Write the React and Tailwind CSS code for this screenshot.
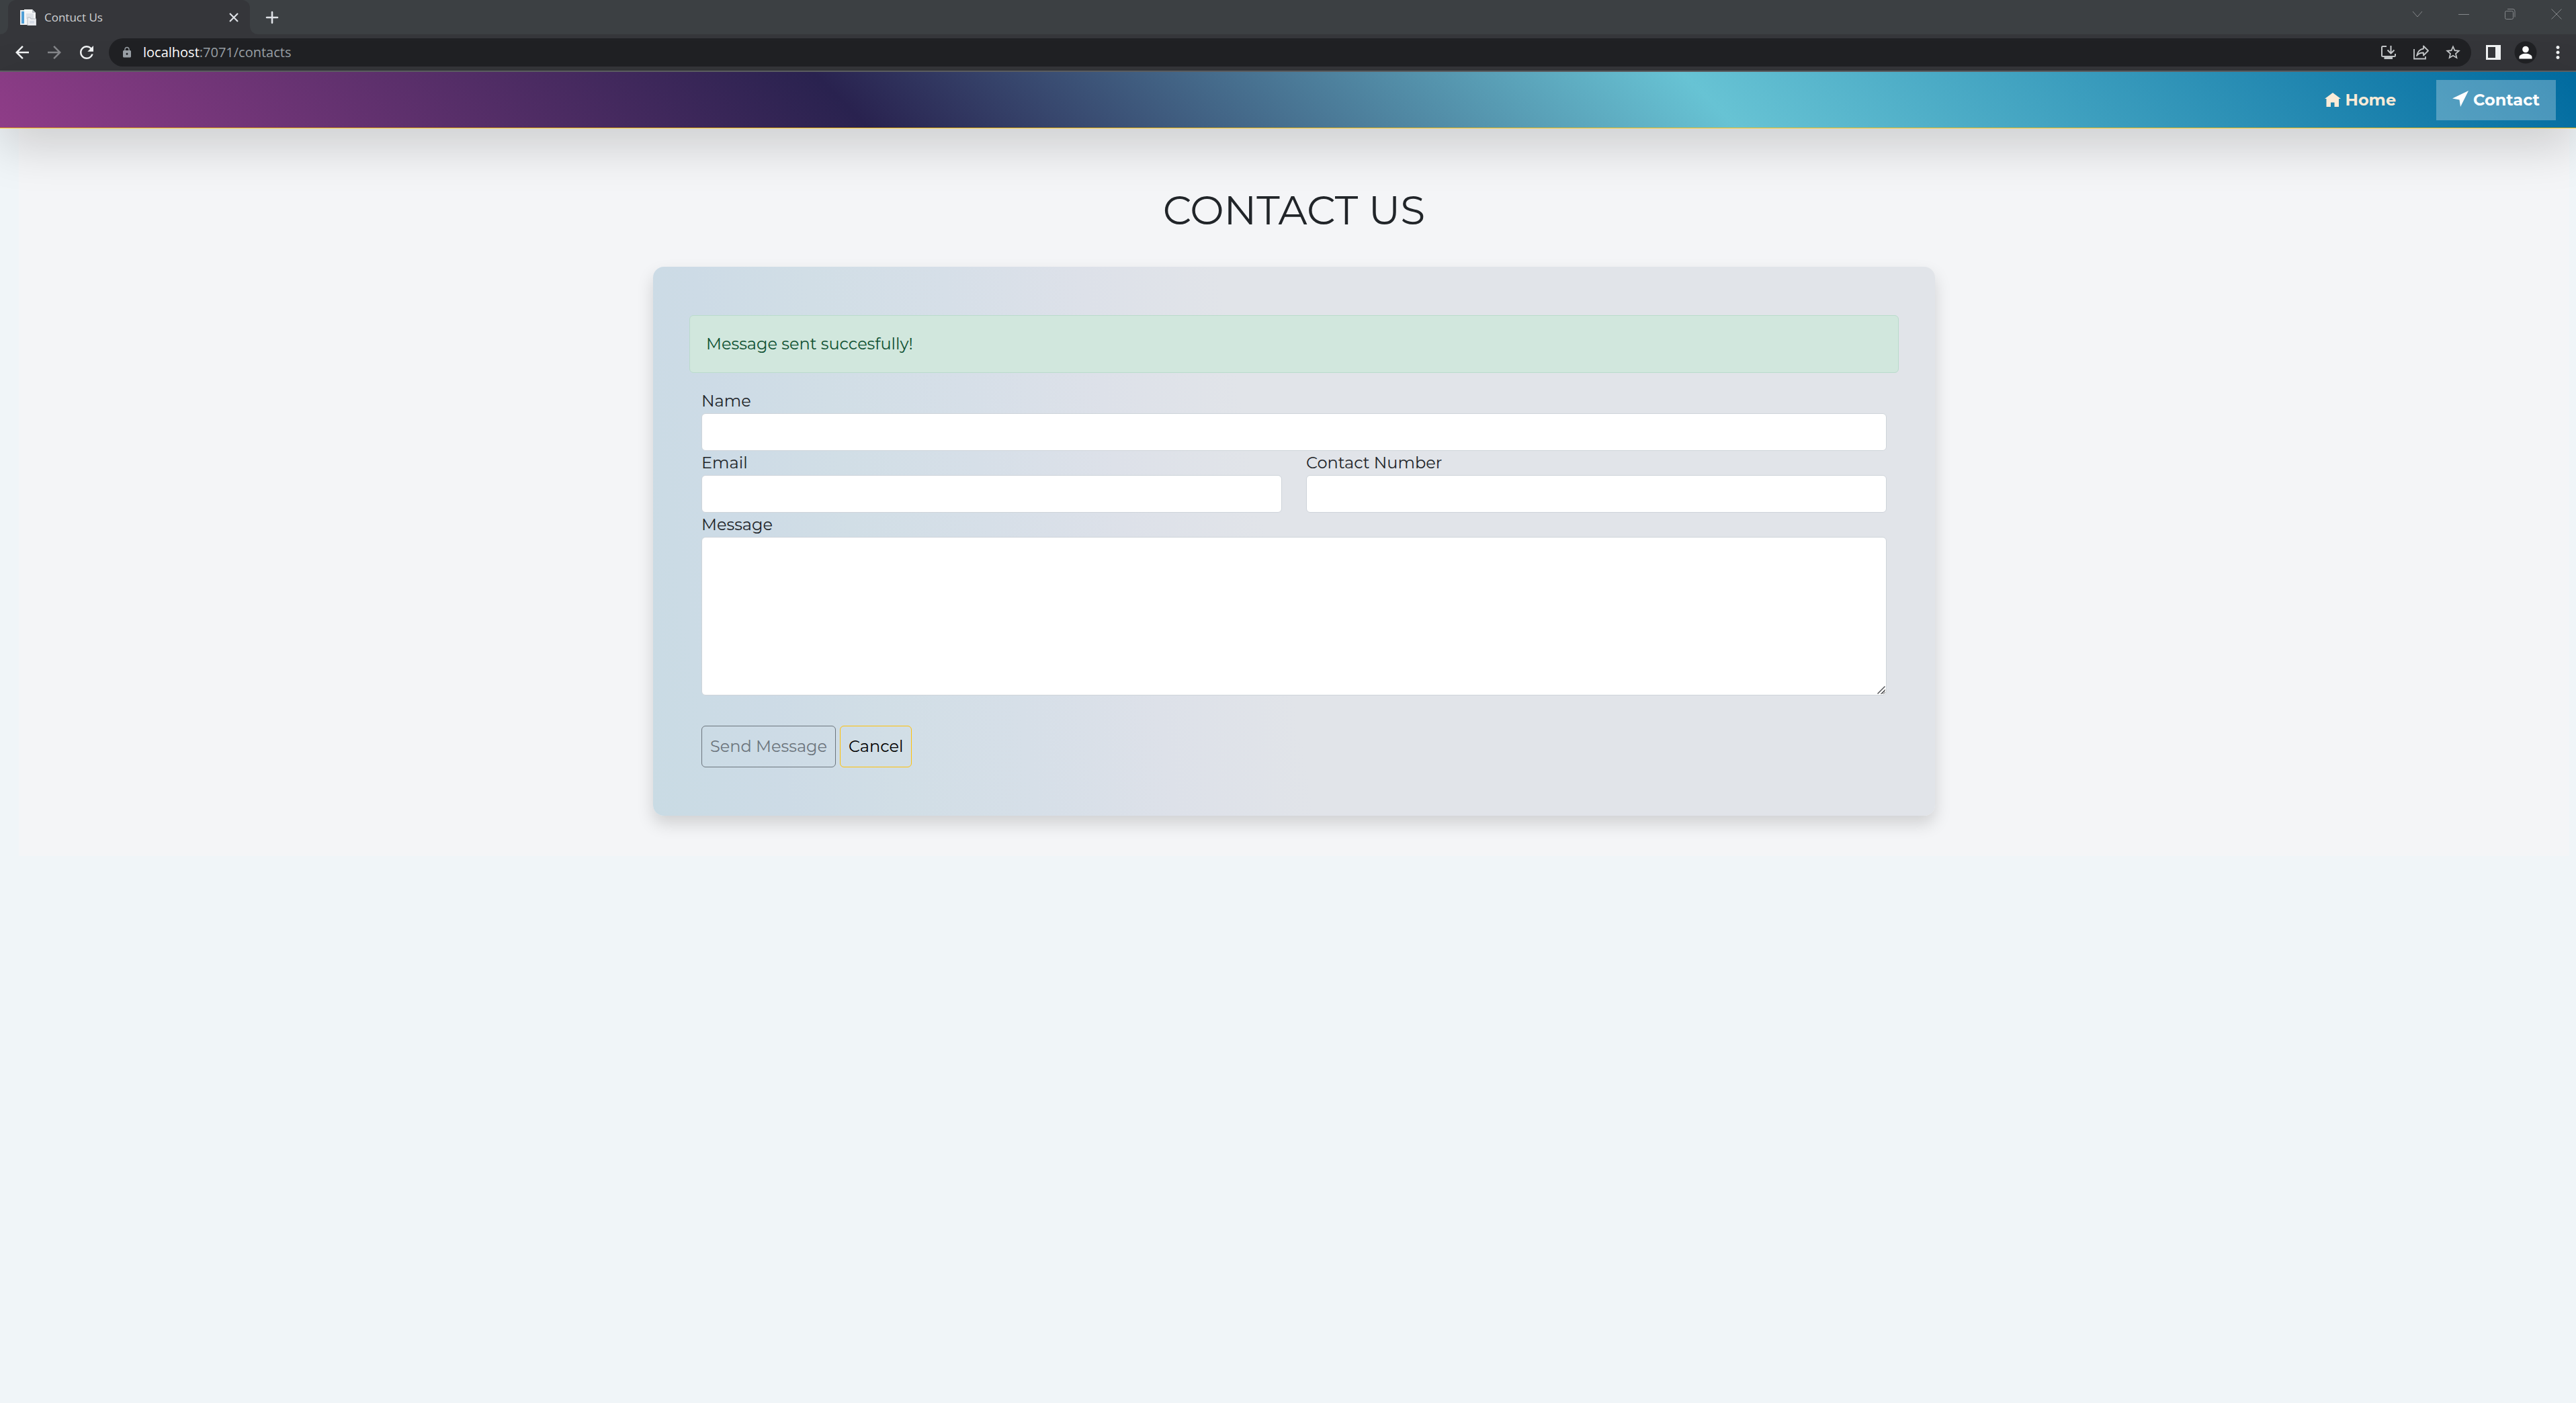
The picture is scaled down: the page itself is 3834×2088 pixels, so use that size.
import React from 'react';
import { MdArrowBack, MdArrowForward, MdRefresh, MdLock, MdMoreVert, MdStarBorder } from 'react-icons/md';

function Favicon() {
  return (
    <svg className="h-6 w-6" viewBox="0 0 24 24" aria-hidden="true">
      <path d="M0 1h9v22H0z" fill="#e9edf0" />
      <path d="M2 3h4v18H2z" fill="#4f9fd6" />
      <path d="M6 0h12l5 5v18H6z" fill="#f4f5f6" />
      <path d="M18 0l5 5h-5z" fill="#b9bec4" />
      <path d="M9 6h11v8H9z" fill="#dfe3e8" />
      <path d="M11 12h4l1 2h8v10H11z" fill="#eceef1" stroke="#b4bac2" />
      <path d="M14 17h7v4h-7z" fill="#d5dbe6" />
    </svg>
  );
}

function WindowButton({ label, children }) {
  return (
    <button type="button" aria-label={label} className="flex h-6 w-6 items-center justify-center">
      <svg className="h-4 w-4" viewBox="0 0 16 16" fill="none" stroke="currentColor" aria-hidden="true">
        {children}
      </svg>
    </button>
  );
}

function TabStrip() {
  return (
    <div className="flex h-[51px] items-stretch bg-[#3c4043]">
      <div className="w-3 bg-[#35363a]">
        <div className="h-full rounded-br-xl bg-[#3c4043]" />
      </div>
      <div className="flex w-[360px] items-center rounded-t-xl bg-[#35363a] pr-4 pl-[18px]">
        <Favicon />
        <span className="ml-3 flex-1 font-['Open_Sans',sans-serif] text-[17px] text-[#cfd1d3]">Contuct Us</span>
        <button type="button" aria-label="Close tab" className="text-[#dee1e6]">
          <svg className="h-4 w-4" viewBox="0 0 16 16" fill="none" stroke="currentColor" strokeWidth="2.2" aria-hidden="true">
            <path d="M2 2l12 12M14 2L2 14" />
          </svg>
        </button>
      </div>
      <div className="w-3 bg-[#35363a]">
        <div className="h-full rounded-bl-xl bg-[#3c4043]" />
      </div>
      <button type="button" aria-label="New tab" className="ml-[9px] text-[#dee1e6]">
        <svg className="h-6 w-6" viewBox="0 0 24 24" fill="none" stroke="currentColor" strokeWidth="2.6" aria-hidden="true">
          <path d="M4 12h16M12 4v16" strokeLinecap="round" />
        </svg>
      </button>
      <div className="ml-auto flex h-[42px] items-center gap-[45px] pr-[17px] text-[#85888b]">
        <WindowButton label="Search tabs">
          <path d="M1 4l7 8 7-8" />
        </WindowButton>
        <WindowButton label="Minimize">
          <path d="M0 8.5h16" />
        </WindowButton>
        <WindowButton label="Restore">
          <rect x="0.5" y="3.5" width="12" height="12" rx="2" />
          <path d="M4 0.5h8a3 3 0 0 1 3 3v9" />
        </WindowButton>
        <WindowButton label="Close window">
          <path d="M0.5 0.5l15 15M15.5 0.5l-15 15" />
        </WindowButton>
      </div>
    </div>
  );
}

function ToolButton({ label, children }) {
  return (
    <button type="button" aria-label={label} className="flex h-[42px] w-12 items-center justify-center">
      {children}
    </button>
  );
}

function Toolbar() {
  return (
    <div className="flex items-center border-b-2 border-[#5f6164] bg-[#35363a] py-1.5 pr-[3px] pl-[9px] text-[#f1f3f4]">
      <ToolButton label="Back"><MdArrowBack className="h-[30px] w-[30px]" /></ToolButton>
      <ToolButton label="Forward"><MdArrowForward className="h-[30px] w-[30px] text-[#85868a]" /></ToolButton>
      <ToolButton label="Reload"><MdRefresh className="h-[30px] w-[30px]" /></ToolButton>
      <div className="mx-[9px] flex h-[42px] flex-1 items-center rounded-full bg-[#202124] pr-[3px] pl-[18px]">
        <MdLock className="h-[18px] w-[18px] text-[#9aa0a6]" />
        <span className="ml-[15px] flex-1 font-['Open_Sans',sans-serif] text-[20px] text-[#9aa0a6]">
          <span className="text-white">localhost</span>:7071/contacts
        </span>
        <div className="flex text-[#c4c7c9]">
          <ToolButton label="Install app">
            <svg className="h-6 w-6" viewBox="0 0 24 24" fill="none" stroke="currentColor" strokeWidth="2" aria-hidden="true">
              <path d="M9 3H3.500a1.500 1.500 0 0 0-1.500 1.500v12A1.500 1.500 0 0 0 3.500 18h17a1.500 1.500 0 0 0 1.500-1.500V14" />
              <path d="M15.500 2v11M10.500 8.500l5 5 5-5" />
              <path d="M5.500 18.500h12.500V22H5.500z" fill="currentColor" stroke="none" />
            </svg>
          </ToolButton>
          <ToolButton label="Share">
            <svg className="h-6 w-6" viewBox="0 0 24 24" fill="none" stroke="currentColor" strokeWidth="1.8" aria-hidden="true">
              <path d="M2 7v14.500h17V18" />
              <path d="M16 2.500l7 7-7 7v-4c-4-.2-7.500 1-10 4.500 1-5.500 4-9.500 10-10.500z" strokeLinejoin="round" />
            </svg>
          </ToolButton>
          <ToolButton label="Bookmark"><MdStarBorder className="h-[26px] w-[26px]" /></ToolButton>
        </div>
      </div>
      <ToolButton label="Side panel">
        <svg className="h-[22px] w-[22px]" viewBox="0 0 22 22" aria-hidden="true">
          <path d="M0 0h22v22H0zM3 3v16h11V3z" fill="currentColor" fillRule="evenodd" />
        </svg>
      </ToolButton>
      <ToolButton label="Profile">
        <svg className="h-[34px] w-[34px]" viewBox="0 0 34 34" aria-hidden="true">
          <circle cx="17" cy="17" r="16.500" fill="#202124" />
          <circle cx="17" cy="12.500" r="4.800" fill="#fff" />
          <path d="M7.500 26.500v-2.500c0-3.200 5-5.200 9.500-5.200s9.500 2 9.500 5.200v2.500z" fill="#fff" />
        </svg>
      </ToolButton>
      <ToolButton label="Menu"><MdMoreVert className="h-[30px] w-[30px]" /></ToolButton>
    </div>
  );
}

function SiteNav() {
  return (
    <nav className="relative z-10 flex h-[84px] items-center justify-end gap-9 border-b border-[#ffc107] bg-[linear-gradient(45deg,#8f3d88,#29224f_33%,#67c3d4_66%,#006a9f)] pr-[30px] text-2xl leading-9 font-bold shadow-[0_24px_72px_rgba(0,0,0,0.175)]">
      <a href="#home" className="flex items-center gap-[7px] px-6 py-3 text-[#faebd7]">
        <svg className="h-6 w-6" viewBox="0 0 24 24" fill="currentColor" aria-hidden="true">
          <path d="M12 1L0 10h2.500v12H9v-6.500h5.500V22H21V10h3z" />
        </svg>
        Home
      </a>
      <a href="#contact" aria-current="page" className="flex items-center gap-[7px] bg-white/27 px-6 py-3 text-white">
        <svg className="mb-1 h-6 w-6" viewBox="0 0 24 24" fill="currentColor" aria-hidden="true">
          <path d="M24 0L0 11.500l10.500 2L12 24z" />
        </svg>
        Contact
      </a>
    </nav>
  );
}

function Field({ id, label, type = 'text' }) {
  return (
    <div className="flex flex-col">
      <label htmlFor={id}>{label}</label>
      <input id={id} type={type} className="h-14 w-full rounded-md border border-[#ced4da] bg-white px-[18px]" />
    </div>
  );
}

function ContactForm() {
  return (
    <section className="w-full max-w-[1908px] rounded-2xl bg-[linear-gradient(80deg,#c9dbe4,#cddbe6_10%,#d1dee6_18%,#d6dfe8_28%,#dde1e9_38%,#e1e4e9_48%)] px-[54px] py-[72px] shadow-[0_12px_24px_rgba(0,0,0,0.15)]">
      <div role="alert" className="mb-6 rounded-md border border-[#badbcc] bg-[#d1e7dd] p-6 text-[#0f5132]">
        Message sent succesfully!
      </div>
      <form className="px-[18px]" onSubmit={(e) => e.preventDefault()}>
        <Field id="name" label="Name" />
        <div className="grid grid-cols-2 gap-9">
          <Field id="email" label="Email" type="email" />
          <Field id="phone" label="Contact Number" type="tel" />
        </div>
        <div className="relative flex flex-col">
          <label htmlFor="message">Message</label>
          <textarea id="message" className="h-[236px] w-full rounded-md border border-[#ced4da] bg-white px-[18px] py-2" />
          <svg className="pointer-events-none absolute right-0.5 bottom-0.5 h-3 w-3" viewBox="0 0 12 12" fill="none" stroke="#55565a" strokeWidth="1.5" aria-hidden="true">
            <path d="M0.500 11.500l11-11M6.500 11.500l5-5" />
          </svg>
        </div>
        <div className="mt-[45px] flex gap-1.5">
          <button type="submit" className="rounded-md border border-[#6c757d] p-3 text-[#6c757d]">Send Message</button>
          <button type="button" className="rounded-md border border-[#ffc107] p-3 text-black">Cancel</button>
        </div>
      </form>
    </section>
  );
}

export default function App() {
  return (
    <div className="min-h-screen bg-[#f0f5f8] font-['Montserrat','Inter',sans-serif] text-[#212529]">
      <TabStrip />
      <Toolbar />
      <SiteNav />
      <main className="mr-[10px] ml-7 flex flex-col items-center bg-[#f4f5f7] pt-[86px] pb-[60px] text-2xl leading-9">
        <h1 className="mb-12 text-[60px] leading-[72px]">CONTACT US</h1>
        <ContactForm />
      </main>
    </div>
  );
}
